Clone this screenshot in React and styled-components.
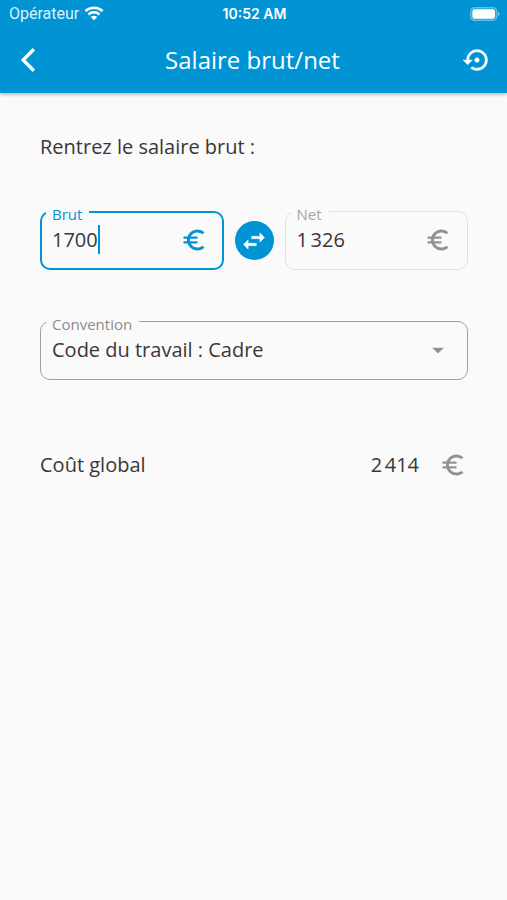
import React, { useState } from "react";
import styled, { createGlobalStyle, css } from "styled-components";
import {
  MdArrowDropDown,
  MdEuroSymbol,
  MdSettingsBackupRestore,
  MdSwapHoriz,
} from "react-icons/md";

const color = {
  primary: "#0094d4",
  page: "#fafafa",
  text: "#383838",
  muted: "#8c8c8c",
  outline: "#a0a0a0",
  disabled: "#e0e0e0",
};

const GlobalStyle = createGlobalStyle`
  *, *::before, *::after { box-sizing: border-box; }
  body {
    margin: 0;
    background: ${color.page};
    color: ${color.text};
    font-family: "Open Sans", "Noto Sans", sans-serif;
    font-size: 20px;
    line-height: 28px;
  }
`;

const Screen = styled.div`
  min-height: 100vh;
  background: ${color.page};
`;

const Header = styled.header`
  background: ${color.primary};
  color: #fff;
  box-shadow: 0 1px 4px rgba(0, 0, 0, 0.35);
`;

const StatusBar = styled.div`
  display: grid;
  grid-template-columns: 1fr auto 1fr;
  align-items: center;
  height: 27px;
  padding: 0 7px 0 9px;
  font-family: Inter, sans-serif;
  line-height: 20px;
`;

const Carrier = styled.span`
  display: flex;
  align-items: center;
  gap: 5px;
  font-family: Roboto, sans-serif;
  font-size: 16px;
  color: #d9f1fc;
`;

const Clock = styled.time`
  font-size: 14px;
  font-weight: 600;
`;

const Battery = styled.svg`
  justify-self: end;
`;

const Toolbar = styled.div`
  display: grid;
  grid-template-columns: 40px 1fr 40px;
  align-items: center;
  height: 66px;
  padding: 0 10px 0 8px;
`;

const Title = styled.h1`
  margin: 0;
  text-align: center;
  font-size: 24px;
  line-height: 32px;
  font-weight: 400;
`;

const IconButton = styled.button`
  display: grid;
  place-items: center;
  width: 40px;
  height: 40px;
  padding: 0;
  border: 0;
  border-radius: 50%;
  background: ${(p) => (p.$filled ? color.primary : "transparent")};
  color: #fff;
  cursor: pointer;
`;

const SwapButton = styled(IconButton)`
  width: 39px;
  height: 39px;
`;

const Main = styled.main`
  display: flex;
  flex-direction: column;
  padding: 40px 39px 0 40px;
`;

const Intro = styled.p`
  margin: 0 0 50px;
`;

const SalaryRow = styled.div`
  display: grid;
  grid-template-columns: 1fr auto 1fr;
  align-items: center;
  gap: 11px;
  margin-bottom: 51px;
`;

const outlines = {
  active: `2px solid ${color.primary}`,
  disabled: `1px solid ${color.disabled}`,
  idle: `1px solid ${color.outline}`,
};

const Outline = styled.div`
  position: relative;
  display: flex;
  align-items: center;
  min-width: 0;
  height: 59px;
  padding: 0 16px 2px 12px;

  &::before {
    content: "";
    position: absolute;
    inset: 0;
    border: ${(p) => outlines[p.$state]};
    border-radius: 10px;
    pointer-events: none;
  }
`;

const FloatingLabel = styled.label`
  position: absolute;
  top: -7px;
  left: 6px;
  padding: 0 7px 0 6px;
  background: ${color.page};
  color: ${(p) => (p.$state === "active" ? color.primary : p.$state === "disabled" ? "#a6a6a6" : color.muted)};
  font-size: 15px;
  line-height: 20px;
`;

const Entry = styled.span`
  display: flex;
  align-items: center;
  flex: 1;
  min-width: 0;
`;

const Input = styled.input`
  field-sizing: content;
  min-width: 20px;
  max-width: 100%;
  height: 28px;
  padding: 0;
  border: 0;
  outline: 0;
  background: transparent;
  color: inherit;
  font: inherit;
  caret-color: transparent;
`;

const Caret = styled.span`
  width: 2px;
  height: 29px;
  background: ${color.primary};
`;

const Suffix = styled.span`
  display: flex;
  color: ${(p) => (p.$active ? color.primary : "#929292")};
`;

const Select = styled.select`
  flex: 1;
  min-width: 0;
  height: 28px;
  padding: 0;
  border: 0;
  outline: 0;
  appearance: none;
  background: transparent;
  color: inherit;
  font: inherit;
`;

const SelectRow = styled.div`
  margin-bottom: 71px;
`;

const TotalRow = styled.div`
  display: flex;
  align-items: center;
  justify-content: space-between;
  padding-right: 1px;
`;

const Total = styled.output`
  display: flex;
  align-items: center;
  gap: 20px;
`;

const heavier = css`
  stroke: none;

  path:not([fill="none"]) {
    stroke: currentColor;
    stroke-width: 0.4;
  }
`;

const RestoreIcon = styled(MdSettingsBackupRestore)`
  ${heavier}
`;

const SwapIcon = styled(MdSwapHoriz)`
  ${heavier}
`;

const EuroIcon = () => <MdEuroSymbol size={28} aria-label="euros" />;

const BackIcon = () => (
  <svg width="16" height="26" viewBox="0 0 16 26" fill="none" aria-hidden="true">
    <path d="M13.8 2.2 3.2 13l10.6 10.8" stroke="currentColor" strokeWidth="3.4" />
  </svg>
);

function AmountField({ id, label, value, onChange, state }) {
  const active = state === "active";
  return (
    <Outline $state={state}>
      <FloatingLabel htmlFor={id} $state={state}>{label}</FloatingLabel>
      <Entry>
        <Input id={id} value={value} onChange={onChange} readOnly={!onChange} inputMode="numeric" />
        {active && <Caret aria-hidden="true" />}
      </Entry>
      <Suffix $active={active}><EuroIcon /></Suffix>
    </Outline>
  );
}

export default function App() {
  const [gross, setGross] = useState("1700");

  return (
    <Screen>
      <GlobalStyle />
      <Header>
        <StatusBar>
          <Carrier>
            <span>Opérateur</span>
            <svg width="20" height="15" viewBox="0 0 18 14" fill="none" aria-label="Wi-Fi">
              <path d="M1 4.8C5.5 .6 12.5 .6 17 4.8M3.8 7.9c3-2.7 7.4-2.7 10.4 0" stroke="#fff" strokeWidth="2.3" />
              <path d="M6 10.2c1.8-1.5 4.2-1.5 6 0L9 13.4z" fill="#fff" />
            </svg>
          </Carrier>
          <Clock>10:52 AM</Clock>
          <Battery width="30" height="14" viewBox="0 0 30 14" aria-label="Batterie pleine">
            <rect x=".6" y=".6" width="26.2" height="12.8" rx="3.8" fill="#fff" fillOpacity=".15" stroke="#fff" strokeOpacity=".35" strokeWidth="1.2" />
            <rect x="2.4" y="2.2" width="22.6" height="9.6" rx="2.2" fill="#fff" />
            <path d="M28 4.8c2 .7 2 3.7 0 4.4z" fill="#fff" fillOpacity=".5" />
          </Battery>
        </StatusBar>
        <Toolbar>
          <IconButton type="button" aria-label="Retour"><BackIcon /></IconButton>
          <Title>Salaire brut/net</Title>
          <IconButton type="button" aria-label="Réinitialiser"><RestoreIcon size={28} /></IconButton>
        </Toolbar>
      </Header>
      <Main>
        <Intro>Rentrez le salaire brut :</Intro>
        <SalaryRow>
          <AmountField id="gross" label="Brut" value={gross} onChange={(e) => setGross(e.target.value)} state="active" />
          <SwapButton type="button" $filled aria-label="Inverser"><SwapIcon size={28} /></SwapButton>
          <AmountField id="net" label="Net" value={"1\u202f326"} state="disabled" />
        </SalaryRow>
        <SelectRow>
          <Outline $state="idle">
            <FloatingLabel htmlFor="agreement" $state="idle">Convention</FloatingLabel>
            <Select id="agreement" defaultValue="cadre">
              <option value="cadre">Code du travail : Cadre</option>
            </Select>
            <Suffix><MdArrowDropDown size={28} /></Suffix>
          </Outline>
        </SelectRow>
        <TotalRow>
          <span>Coût global</span>
          <Total>{"2\u202f414"}<Suffix><EuroIcon /></Suffix></Total>
        </TotalRow>
      </Main>
    </Screen>
  );
}
